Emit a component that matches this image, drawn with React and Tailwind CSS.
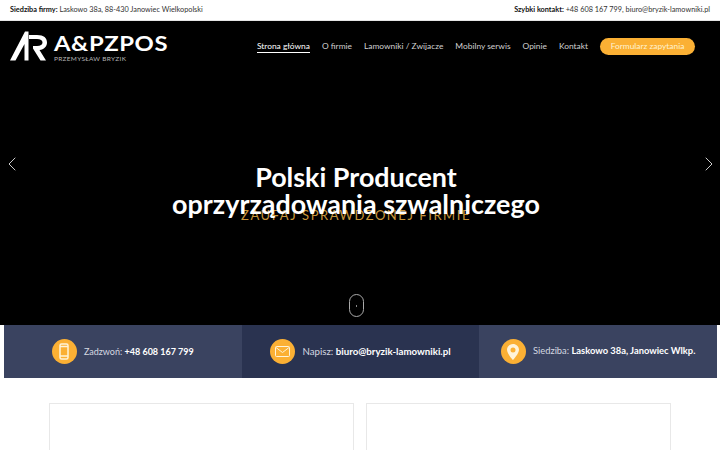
import React from "react";
import { ChevronLeft, ChevronRight } from "lucide-react";

const menu = ["O firmie", "Lamowniki / Zwijacze", "Mobilny serwis", "Opinie", "Kontakt"];

const Logo = () => (
  <div className="flex items-start">
    <svg width="38" height="32" viewBox="0 0 38 32" fill="white">
      <path d="M0 29.5 L15 0.5 L18.5 0.5 L18.5 29.5 L14.5 29.5 L14.5 13 L5.5 29.5 Z" />
      <path d="M19 4 L27 4 C34 4 37 7 37 11.5 C37 15.5 34 18.5 29.5 19 L36 29.5 L30.5 29.5 L23 17.5 L23 15 L27 15 C30.5 15 32.5 13.5 32.5 11.5 C32.5 9.5 30.5 8 27 8 L19 8 Z" />
    </svg>
    <div className="ml-[6px] flex flex-col">
      <span className="text-[20px] leading-[20px] mt-[2px] font-bold tracking-[0.5px] text-white scale-x-[1.19] origin-left">A&amp;PZPOS</span>
      <span className="text-[6.5px] leading-[8px] mt-[2px] tracking-[0.3px] text-[#b5b5b5]">PRZEMYSŁAW BRYZIK</span>
    </div>
  </div>
);

const ContactCell = ({ bg, icon, label, value, size }) => (
  <div className={`flex-1 h-full flex items-center justify-center ${bg}`}>
    <div className="w-[25px] h-[25px] rounded-full bg-[#fbb034] flex items-center justify-center shrink-0 mr-[7px]">
      {icon}
    </div>
    <span className={`text-[#d5d8e0] ${size}`}>
      {label} <b className="text-white font-bold">{value}</b>
    </span>
  </div>
);

const App = () => {
  return (
    <div className="w-[720px] h-[450px] overflow-hidden bg-white font-['Lato',sans-serif]">
      <div className="h-[21px] flex items-center justify-between px-[10px] text-[7.3px] text-[#333] border-b border-[#e5e5e5]">
        <span><b className="text-[#111]">Siedziba firmy:</b> Laskowo 38a, 88-430 Janowiec Wielkopolski</span>
        <span><b className="text-[#111]">Szybki kontakt:</b> +48 608 167 799, biuro@bryzik-lamowniki.pl</span>
      </div>

      <div className="relative h-[304px] bg-black flex flex-col">
        <div className="flex items-start justify-between pl-[10px] pr-[25px] pt-[10px]">
          <Logo />
          <nav className="flex items-center gap-[12px] text-[8.4px] text-[#d0d0d0] pt-[7px]">
            <span className="text-white border-b border-white leading-[12px]">Strona główna</span>
            {menu.map((item) => (
              <span key={item}>{item}</span>
            ))}
            <span className="h-[17px] w-[95px] rounded-full bg-[#fbb034] text-[#fff2d0] flex items-center justify-center">Formularz zapytania</span>
          </nav>
        </div>

        <ChevronLeft className="absolute left-0 top-[131px] text-[#cccccc]" size={24} strokeWidth={1} />
        <ChevronRight className="absolute right-[-1px] top-[131px] text-[#cccccc]" size={24} strokeWidth={1} />

        <div className="absolute inset-x-0 top-[142px] pr-[8px] text-center">
          <h1 className="text-[26.9px] leading-[27px] font-bold text-white relative z-10">
            Polski Producent
            <br />
            oprzyrządowania szwalniczego
          </h1>
          <p className="text-[13px] leading-[14px] tracking-[1.55px] text-[#c9963a] -mt-[9px]">ZAUFAJ SPRAWDZONEJ FIRMIE</p>
        </div>

        <div className="absolute left-[349px] top-[273px] w-[15px] h-[23px] rounded-full border border-[#aaa] flex items-center justify-center">
          <span className="w-px h-[2px] bg-[#888]" />
        </div>
      </div>

      <div className="h-[53px] ml-[4px] mr-[3px] flex">
        <ContactCell
          bg="bg-[#3a4360]"
          size="text-[9px]"
          label="Zadzwoń:"
          value="+48 608 167 799"
          icon={
            <svg width="10" height="17" viewBox="0 0 10 17" fill="none" stroke="#fff3d8" strokeWidth="1.5">
              <rect x="1" y="1" width="8" height="15" rx="1.5" />
              <path d="M1 3.5H9M1 13H9" />
            </svg>
          }
        />
        <ContactCell
          bg="bg-[#2a3350]"
          size="text-[9.7px]"
          label="Napisz:"
          value="biuro@bryzik-lamowniki.pl"
          icon={
            <svg width="15" height="11" viewBox="0 0 15 11" fill="none" stroke="#fff3d8" strokeWidth="1">
              <rect x="0.5" y="0.5" width="14" height="10" rx="1" />
              <path d="M1 1.5 L7.5 6.5 L14 1.5" />
            </svg>
          }
        />
        <ContactCell
          bg="bg-[#3a4360]"
          size="text-[9.35px]"
          label="Siedziba:"
          value="Laskowo 38a, Janowiec Wlkp."
          icon={
            <svg width="12" height="16" viewBox="0 0 12 16">
              <path fillRule="evenodd" fill="#fff3d8" d="M6 0C2.7 0 0 2.6 0 5.8 0 9.8 6 16 6 16s6-6.2 6-10.2C12 2.6 9.3 0 6 0Zm0 3.4a2.5 2.5 0 1 1 0 5 2.5 2.5 0 0 1 0-5Z" />
            </svg>
          }
        />
      </div>

      <div className="flex gap-[12px] pl-[49px] pt-[25px]">
        {[0, 1].map((i) => (
          <div key={i} className="w-[305px] h-[60px] border border-[#e8e8e8]" />
        ))}
      </div>
    </div>
  );
};

export default App;
